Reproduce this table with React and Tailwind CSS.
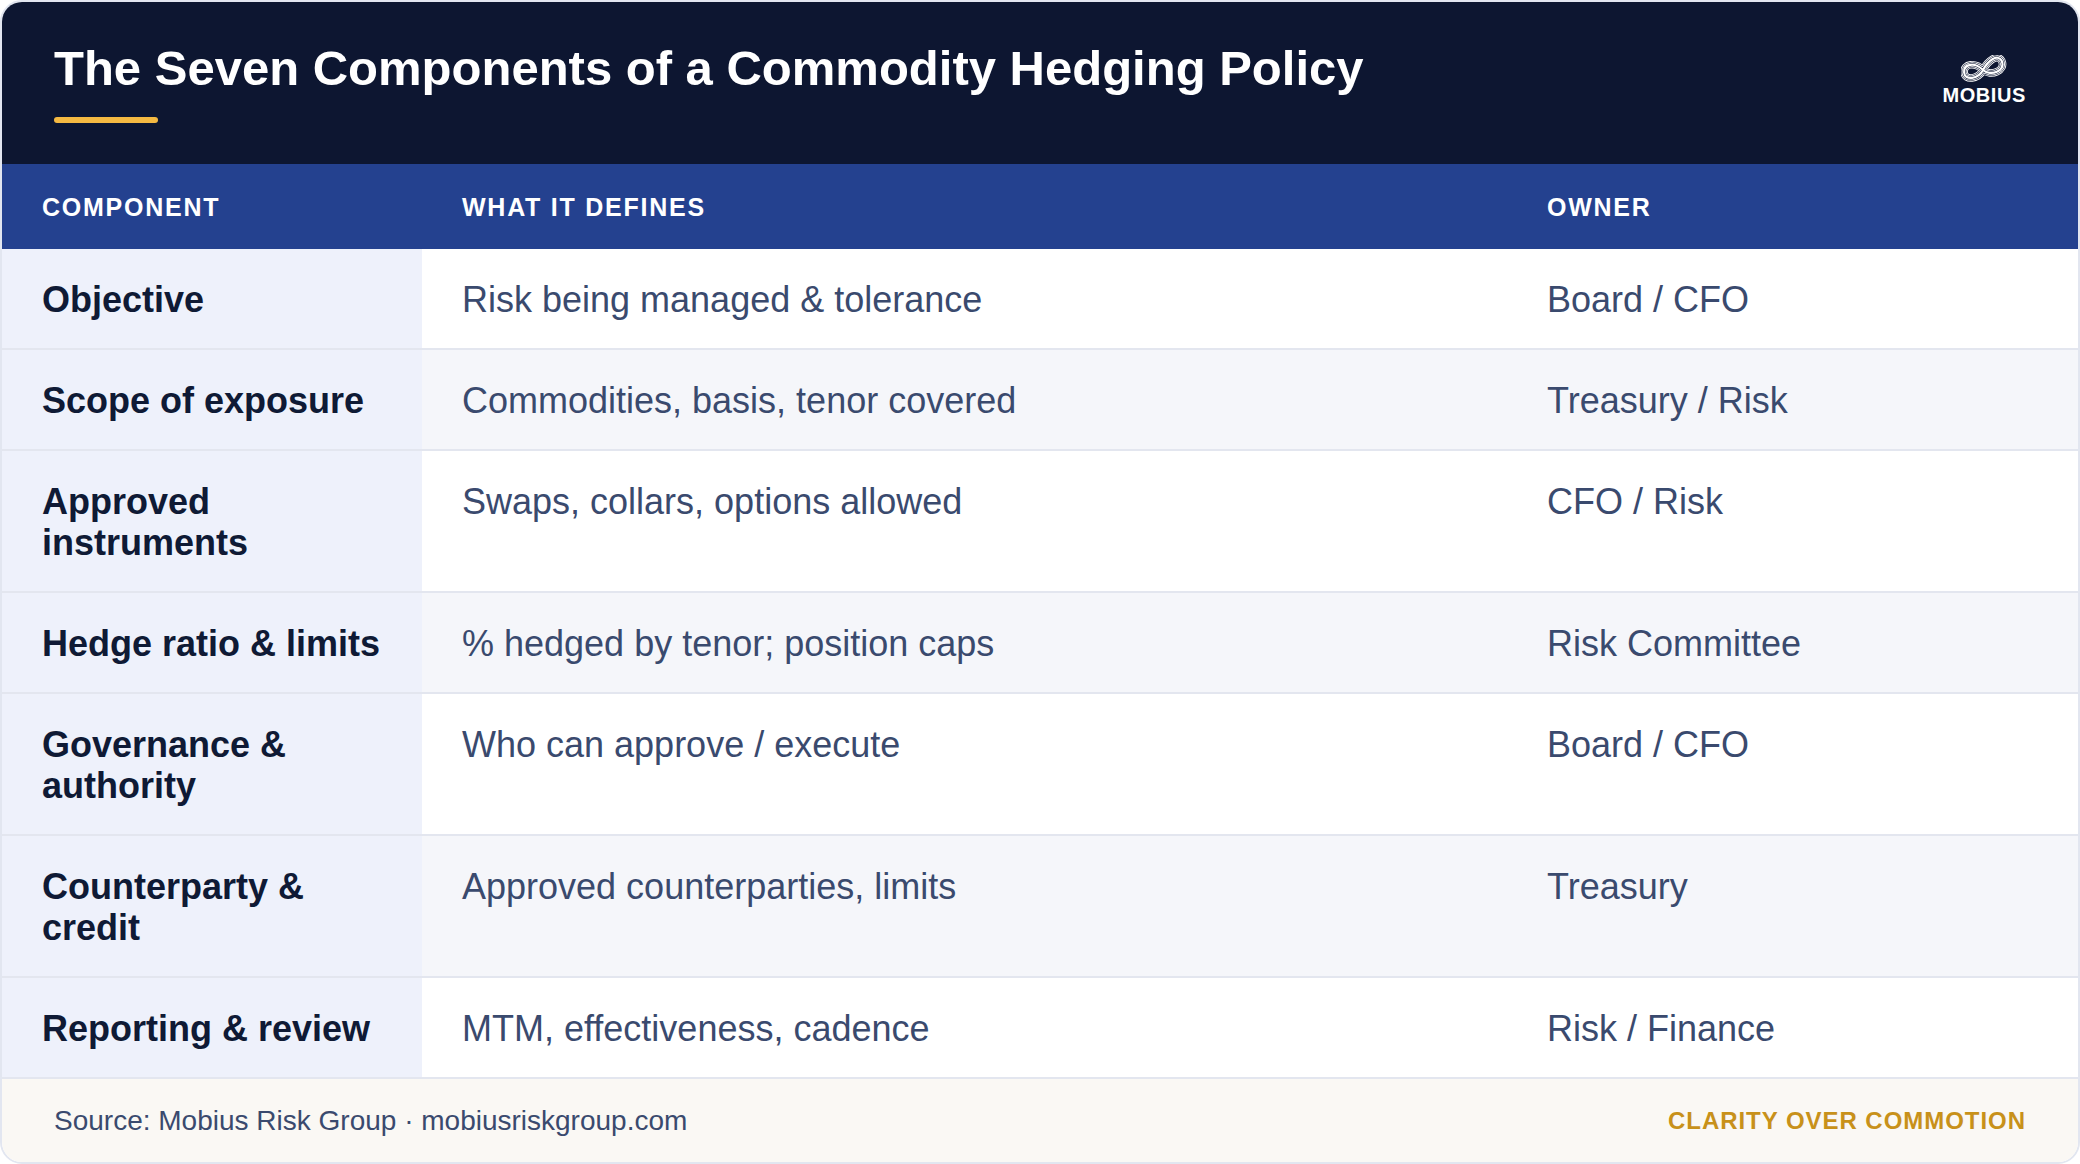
import React from "react";

const rows = [
  { name: "Objective", what: "Risk being managed & tolerance", owner: "Board / CFO" },
  { name: "Scope of exposure", what: "Commodities, basis, tenor covered", owner: "Treasury / Risk" },
  { name: "Approved instruments", what: "Swaps, collars, options allowed", owner: "CFO / Risk" },
  { name: "Hedge ratio & limits", what: "% hedged by tenor; position caps", owner: "Risk Committee" },
  { name: "Governance & authority", what: "Who can approve / execute", owner: "Board / CFO" },
  { name: "Counterparty & credit", what: "Approved counterparties, limits", owner: "Treasury" },
  { name: "Reporting & review", what: "MTM, effectiveness, cadence", owner: "Risk / Finance" },
];

const MobiusLogo = () => {
  const d =
    "M22 14 C16 5 4 4 3 13 C2 22 16 22 22 14 C28 6 39 0 42 8 C45 19 28 22 22 14 Z";
  return (
    <div className="flex flex-col items-center mb-[2px]">
      <svg width="46" height="29" viewBox="0 0 46 29">
        <g transform="translate(0 1) rotate(-10 22 14)" fill="none" strokeLinejoin="round">
          <path d={d} stroke="#ffffff" strokeWidth="7.6" />
          <path d={d} stroke="#0d1631" strokeWidth="5.9" />
          <path d={d} stroke="#ffffff" strokeWidth="4.9" />
          <path d={d} stroke="#0d1631" strokeWidth="3.2" />
          <path d={d} stroke="#ffffff" strokeWidth="2.2" />
        </g>
      </svg>
      <span className="mt-[1px] text-[20px] leading-[20px] font-bold tracking-[0.03em] text-white">
        MOBIUS
      </span>
    </div>
  );
};

const App = () => {
  return (
    <div className="w-[2080px] h-[1164px] bg-white font-['Liberation_Sans',Arial,sans-serif]">
      <div className="h-full flex flex-col border-2 border-[#e2e6f0] rounded-[22px] overflow-hidden bg-white">
        {/* title bar */}
        <div className="bg-[#0d1631] pt-[37px] pb-[41px] px-[52px] flex items-center justify-between">
          <div className="flex flex-col">
            <h1 className="text-[49px] leading-[58px] font-bold text-white">
              The Seven Components of a Commodity Hedging Policy
            </h1>
            <div className="mt-[20px] w-[104px] h-[6px] rounded-full bg-[#f4b942]"></div>
          </div>
          <MobiusLogo />
        </div>

        {/* column heads */}
        <div className="grid grid-cols-[420px_1085px_1fr] h-[85px] bg-[#24418f] text-white text-[25px] font-bold tracking-[0.07em]">
          <div className="flex items-center pl-[40px] pt-[2px]">COMPONENT</div>
          <div className="flex items-center pl-[40px] pt-[2px]">WHAT IT DEFINES</div>
          <div className="flex items-center pl-[40px] pt-[2px]">OWNER</div>
        </div>

        {/* rows */}
        {rows.map((r, i) => (
          <div
            key={r.name}
            className={
              "grid grid-cols-[420px_1085px_1fr] border-b-2 border-[#e3e6ef] text-[36px] leading-[41px] " +
              (i % 2 === 1 ? "bg-[#f5f6fa]" : "bg-white")
            }
          >
            <div className="bg-[#eef1fb] pl-[40px] pr-[30px] pt-[30px] pb-[28px] font-bold text-[#0f1a35]">
              {r.name}
            </div>
            <div className="pl-[40px] pt-[30px] pb-[28px] text-[#3a4a6e]">{r.what}</div>
            <div className="pl-[40px] pt-[30px] pb-[28px] text-[#3a4a6e]">{r.owner}</div>
          </div>
        ))}

        {/* footer */}
        <div className="flex-1 bg-[#faf8f4] px-[52px] flex items-center justify-between">
          <p className="text-[28px] text-[#3a4a6e]">
            Source: Mobius Risk Group · mobiusriskgroup.com
          </p>
          <p className="text-[24px] font-bold tracking-[0.04em] text-[#c8911a]">
            CLARITY OVER COMMOTION
          </p>
        </div>
      </div>
    </div>
  );
};

export default App;
